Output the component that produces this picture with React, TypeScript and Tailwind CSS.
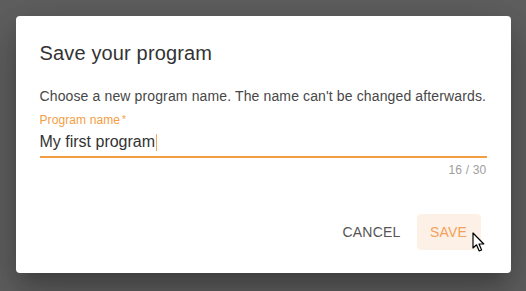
import React from "react";

export default function App() {
  return (
    <div
      className="w-[526px] h-[291px] bg-[#5f5f5f] flex items-start justify-center pt-[16px] overflow-hidden"
      style={{ fontFamily: '"Liberation Sans", Arial, sans-serif' }}
    >
      <div className="relative w-[495px] h-[257px] bg-white rounded-[4px] flex flex-col shadow-[0_11px_15px_-7px_rgba(0,0,0,0.2),0_24px_38px_3px_rgba(0,0,0,0.14),0_9px_46px_8px_rgba(0,0,0,0.12)]">
        <h2 className="px-[24px] pt-[21px] text-[20px] leading-[32px] text-[#333333] font-normal tracking-[0.15px]">
          Save your program
        </h2>
        <div className="px-[24px] pt-[17px] flex flex-col">
          <p className="text-[14px] leading-[20px] text-[#474747] tracking-[0.13px] whitespace-nowrap">
            Choose a new program name. The name can't be changed afterwards.
          </p>
          <div className="mt-[8px] text-[12px] leading-[12px] text-[#f59d42] tracking-[0.1px]">
            Program name<sup className="ml-[2px] text-[10px] relative top-[-1px]">*</sup>
          </div>
          <div className="mt-[4px] flex items-center h-[24px] text-[16px] leading-[24px] text-[#333333] mb-[2px]">
            <span>My first program</span>
            <span className="inline-block w-[1px] h-[17px] bg-[#f5a860] ml-[1px]" />
          </div>
          <div className="h-[2px] bg-[#f59d42]" />
          <div className="mt-[4px] text-right text-[12px] leading-[16px] text-[#9e9e9e] tracking-[0.2px]">
            16 / 30
          </div>
        </div>
        <div className="mt-auto pb-[23px] pr-[30px] flex justify-end items-center gap-[8px]">
          <div className="h-[36px] min-w-[64px] px-[8px] rounded-[4px] flex items-center justify-center text-[14px] text-[#555555] tracking-[0.2px]">
            CANCEL
          </div>
          <div className="relative h-[36px] min-w-[64px] px-[8px] rounded-[4px] bg-[#fdf1e7] flex items-center justify-center text-[14px] text-[#f5a05a] tracking-[0.2px]">
            SAVE
            <svg
              className="absolute left-[55px] top-[18px]"
              width="14"
              height="21"
              viewBox="0 0 14 21"
            >
              <path
                d="M1 1 L1 16 L4.5 12.8 L7.2 19 L9.6 18 L7 12 L11.8 12 Z"
                fill="#ffffff"
                stroke="#000000"
                strokeWidth="1.2"
                strokeLinejoin="round"
              />
            </svg>
          </div>
        </div>
      </div>
    </div>
  );
}
